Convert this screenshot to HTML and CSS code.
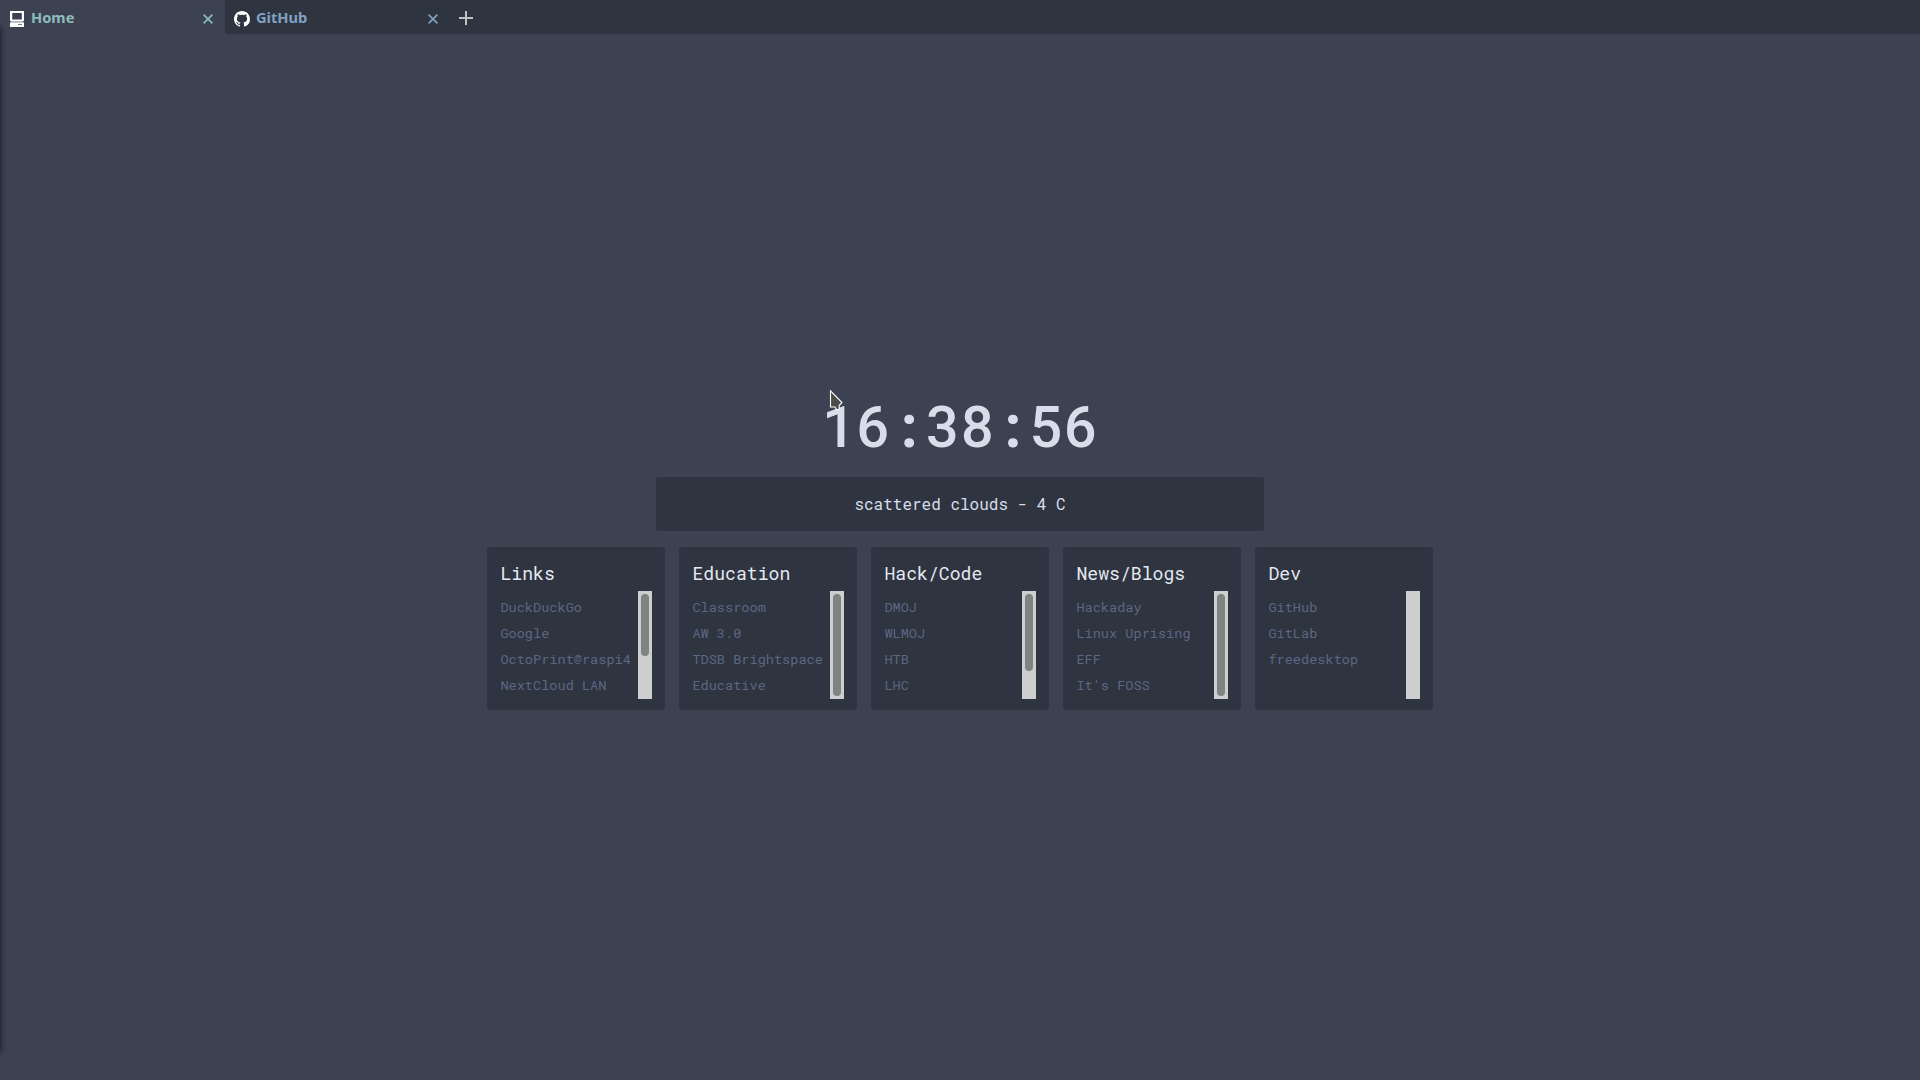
FILE: index.html
```html
<!DOCTYPE html>
<html lang="en">
<head>
<meta charset="utf-8">
<title>Home</title>
<link rel="stylesheet" href="styles.css">
</head>
<body>
<header class="tabs">
  <div class="tab active">
    <svg class="favicon pc" width="14" height="16" viewBox="0 0 14 16"><path fill="#fff" fill-rule="evenodd" d="M0 0h14v10H0zM2.2 2v6.500h9.600V2z"/><path fill="#b9bdc5" d="M1 10h12v1H1z"/><path fill="#fff" d="M0 11.300h14V16H0z"/><path fill="#777c86" d="M8 13h4v1H8z"/></svg>
    <span class="name">Home</span>
    <svg class="close" width="10" height="10" viewBox="0 0 10 10"><path d="M.6.6l8.800 8.800M9.400.6L.6 9.400"/></svg>
  </div>
  <div class="tab">
    <svg class="favicon" width="16" height="16" viewBox="0 0 16 16"><path fill="#fff" d="M8 0C3.580 0 0 3.580 0 8c0 3.540 2.290 6.530 5.470 7.590.4.070.550-.170.550-.380 0-.190-.010-.820-.010-1.490-2.010.370-2.530-.490-2.690-.940-.090-.230-.480-.940-.820-1.130-.280-.150-.680-.520-.010-.530.630-.010 1.080.580 1.230.820.720 1.210 1.870.870 2.330.660.070-.520.280-.870.510-1.070-1.780-.2-3.640-.890-3.640-3.950 0-.870.310-1.590.820-2.150-.080-.2-.360-1.020.080-2.120 0 0 .670-.210 2.200.820.640-.180 1.320-.270 2-.270s1.360.090 2 .270c1.530-1.040 2.200-.820 2.200-.820.440 1.100.160 1.920.080 2.120.510.560.820 1.270.820 2.150 0 3.070-1.870 3.750-3.650 3.950.290.250.540.730.540 1.480 0 1.070-.010 1.930-.010 2.200 0 .210.150.460.550.380A8.010 8.010 0 0 0 16 8c0-4.420-3.580-8-8-8z"/></svg>
    <span class="name">GitHub</span>
    <svg class="close" width="10" height="10" viewBox="0 0 10 10"><path d="M.6.6l8.800 8.800M9.400.6L.6 9.400"/></svg>
  </div>
  <svg class="plus" width="14" height="14" viewBox="0 0 14 14"><path d="M7 0v14M0 7h14"/></svg>
</header>
<div class="edge"></div>
<main>
  <div class="clock">16:38:56</div>
  <div class="weather">scattered clouds - 4 C</div>
  <div class="cards">
    <section class="card"><h2>Links</h2><div class="list"><ul><li>DuckDuckGo</li><li>Google</li><li>OctoPrint@raspi4</li><li>NextCloud LAN</li></ul><div class="bar"><div class="thumb" style="height:62px"></div></div></div></section>
    <section class="card"><h2>Education</h2><div class="list"><ul><li>Classroom</li><li>AW 3.0</li><li>TDSB Brightspace</li><li>Educative</li></ul><div class="bar"><div class="thumb" style="height:102px"></div></div></div></section>
    <section class="card"><h2>Hack/Code</h2><div class="list"><ul><li>DMOJ</li><li>WLMOJ</li><li>HTB</li><li>LHC</li></ul><div class="bar"><div class="thumb" style="height:77px"></div></div></div></section>
    <section class="card"><h2>News/Blogs</h2><div class="list"><ul><li>Hackaday</li><li>Linux Uprising</li><li>EFF</li><li>It's FOSS</li></ul><div class="bar"><div class="thumb" style="height:102px"></div></div></div></section>
    <section class="card"><h2>Dev</h2><div class="list"><ul><li>GitHub</li><li>GitLab</li><li>freedesktop</li></ul><div class="bar"></div></div></section>
  </div>
</main>
<svg class="cursor" width="15" height="23" viewBox="0 0 15 23"><path d="M1.500 1.800v16.200h4.500l2 3 2.200-1v-3.500l2.800-3z" fill="#4c4c4a" stroke="#fff" stroke-width="1.100"/></svg>
</body>
</html>
```
FILE: styles.css
```css
* { box-sizing: border-box; margin: 0; padding: 0; }
body {
  height: 1080px;
  overflow: hidden;
  background: #3d4252;
  color: #d8dee9;
  font-family: "Roboto Mono", "DejaVu Sans Mono", monospace;
}
.tabs { display: flex; height: 34px; background: #2e3440; }
.tab {
  display: flex;
  width: 225px;
  padding: 2px 12px 0 9px;
  align-items: center;
  color: #81a1c1;
  font: bold 14.67px/20px "Noto Sans", "Open Sans", sans-serif;
}
.tab.active { padding-left: 10px; background: #3d4252; color: #8fbcbb; }
.name { margin-bottom: 2px; }
.favicon { margin-top: 2px; margin-right: 6px; }
.favicon.pc { margin-right: 7px; }
.close { margin-left: auto; margin-top: 2px; fill: none; stroke: currentColor; stroke-width: 1.6; }
.plus { margin: 11px 0 0 9px; fill: none; stroke: #c0c2c6; stroke-width: 2; }
.edge {
  position: absolute;
  left: -6px;
  top: 28px;
  width: 6px;
  height: 1023px;
  box-shadow: 0 0 5px 1px #1c1f28;
}
main { display: flex; flex-direction: column; align-items: center; padding-top: 356px; }
.clock {
  height: 70px;
  font-weight: 500;
  font-size: 57.6px;
  line-height: 70px;
  white-space: nowrap;
}
.weather {
  width: 608px;
  height: 54px;
  margin-top: 17px;
  border-radius: 3px;
  background: #2e3440;
  font-size: 16px;
  line-height: 54px;
  text-align: center;
}
.cards { display: flex; gap: 14px; margin-top: 16px; }
.card { width: 178px; height: 163px; padding: 14px 13px 11px 13.4px; border-radius: 3px; background: #2e3440; }
h2 { height: 30px; color: #e5e9f0; font-size: 18.15px; font-weight: 400; line-height: 24px; }
.list { display: flex; height: 108px; justify-content: space-between; }
ul { padding-top: 3px; list-style: none; color: #5c6783; font-size: 13.6px; line-height: 26px; white-space: nowrap; }
.bar { width: 14px; padding: 3px; background: #cecece; }
.thumb { border-radius: 4px; background: #7f8383; }
.cursor { position: absolute; left: 829px; top: 389px; }
```
